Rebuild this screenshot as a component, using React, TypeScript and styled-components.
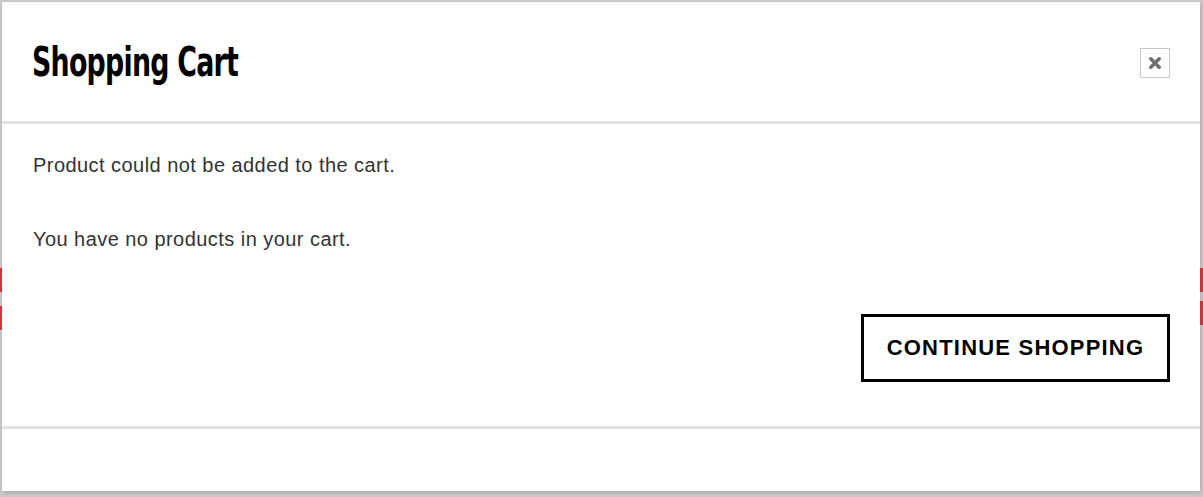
import React from "react";
import styled, { createGlobalStyle } from "styled-components";

const Global = createGlobalStyle`
  html, body { margin: 0; padding: 0; }
  body {
    width: 1203px;
    height: 497px;
    overflow: hidden;
    background-color: #c9c9c9;
    background-image:
      linear-gradient(#d8383c, #d8383c),
      linear-gradient(#d8383c, #d8383c),
      linear-gradient(#d8383c, #d8383c),
      linear-gradient(#d8383c, #d8383c);
    background-size: 2px 24px, 2px 24px, 3px 24px, 3px 24px;
    background-position: 0 268px, 0 306px, 1200px 268px, 1200px 301px;
    background-repeat: no-repeat;
    font-family: "Liberation Sans", Arial, sans-serif;
  }
`;

const Modal = styled.div`
  margin: 2px 0 0 2px;
  width: 1198px;
  height: 489px;
  background: #fff;
  display: flex;
  flex-direction: column;
  box-shadow: 1px 2px 4px rgba(0, 0, 0, 0.15);
`;

const Header = styled.header`
  height: 119px;
  display: flex;
  align-items: center;
  justify-content: space-between;
  padding: 0 30px 0 30px;
  border-bottom: 3px solid #e2e2e2;
`;

const Title = styled.h1`
  margin: 0;
  font-family: "DejaVu Sans Condensed", "DejaVu Sans", sans-serif;
  font-stretch: condensed;
  font-weight: 700;
  font-size: 40px;
  letter-spacing: -1px;
  color: #000;
  transform: scaleX(0.745);
  transform-origin: left center;
`;

const CloseButton = styled.button`
  width: 30px;
  height: 30px;
  padding: 0;
  margin-top: 2px;
  border: 1px solid #c8c8c8;
  background: #fff;
  display: flex;
  align-items: center;
  justify-content: center;
  cursor: pointer;
`;

const Body = styled.div`
  height: 305px;
  padding: 29px 30px 0 31px;
  display: flex;
  flex-direction: column;
  border-bottom: 3px solid #e2e2e2;
  box-sizing: border-box;
`;

const Message = styled.p<{ $gap: number }>`
  margin: 0 0 ${(p) => p.$gap}px 0;
  font-size: 20px;
  line-height: 24px;
  letter-spacing: 0.45px;
  color: #333;
`;

const Actions = styled.div`
  display: flex;
  justify-content: flex-end;
  margin-top: 63px;
`;

const ContinueButton = styled.button`
  width: 309px;
  height: 68px;
  border: 3px solid #000;
  background: #fff;
  font-family: "Liberation Sans", Arial, sans-serif;
  font-weight: 700;
  font-size: 22px;
  color: #000;
  letter-spacing: 1.2px;
  cursor: pointer;
`;

const Footer = styled.footer`
  flex: 1;
`;

export default function App() {
  return (
    <>
      <Global />
      <Modal>
        <Header>
          <Title>Shopping Cart</Title>
          <CloseButton aria-label="Close">
            <svg width="14" height="14" viewBox="0 0 14 14">
              <path
                d="M2.8 2.8 L11.2 11.2 M11.2 2.8 L2.8 11.2"
                stroke="#6f6f6f"
                strokeWidth="3.6"
                strokeLinecap="round"
              />
            </svg>
          </CloseButton>
        </Header>
        <Body>
          <Message $gap={50}>Product could not be added to the cart.</Message>
          <Message $gap={0}>You have no products in your cart.</Message>
          <Actions>
            <ContinueButton>CONTINUE SHOPPING</ContinueButton>
          </Actions>
        </Body>
        <Footer />
      </Modal>
    </>
  );
}
